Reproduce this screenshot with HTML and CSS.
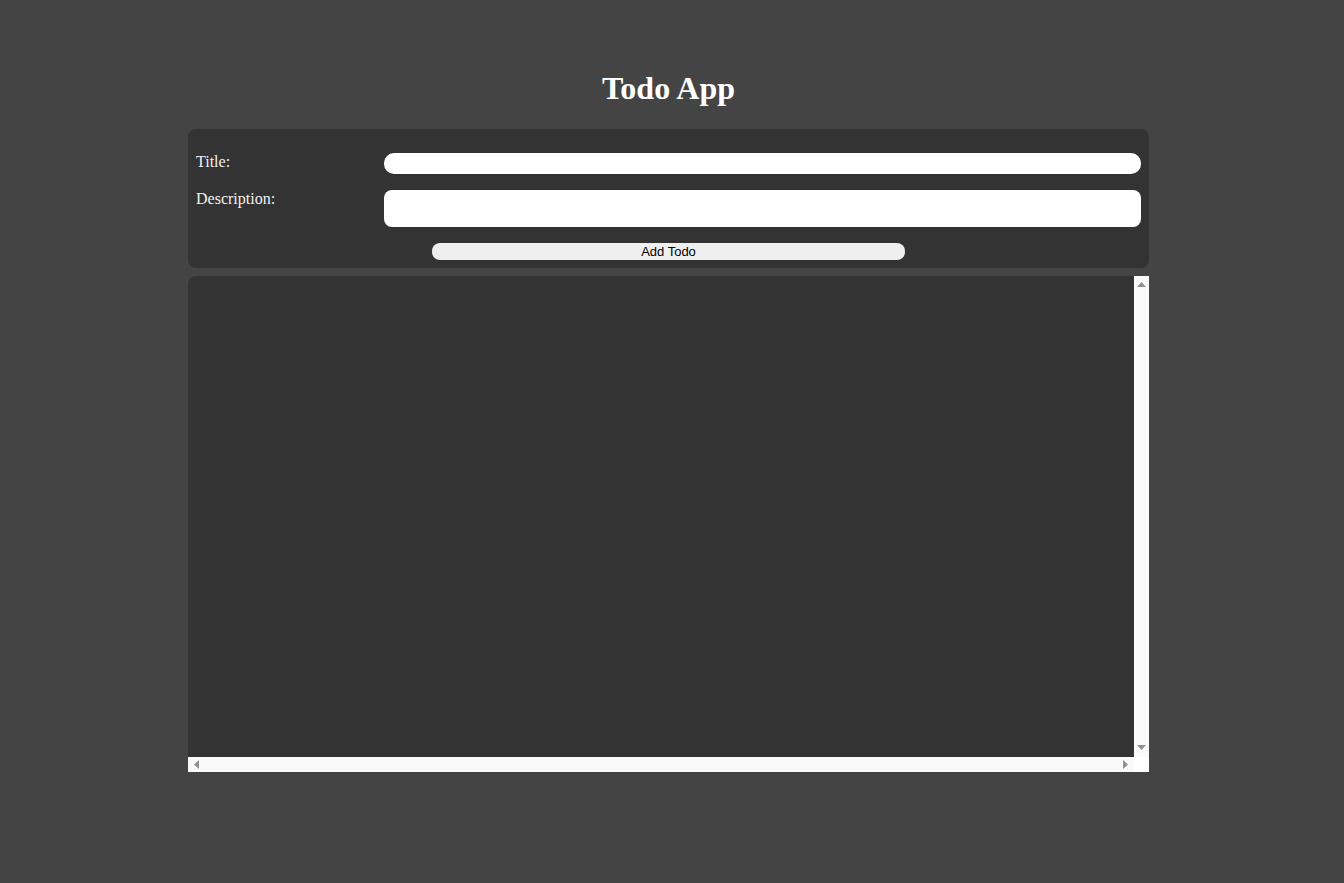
FILE: index.html
```html
<!DOCTYPE html>
<html lang="en">
<head>
<meta charset="utf-8">
<title>Todo App</title>
<link rel="stylesheet" href="styles.css">
</head>
<body>
<div class="app">
  <h1 class="app-title">Todo App</h1>
  <form class="todo-form">
    <div class="form-row">
      <label class="form-label" for="title">Title:</label>
      <input class="form-input" id="title" type="text">
    </div>
    <div class="form-row">
      <label class="form-label" for="desc">Description:</label>
      <textarea class="form-textarea" id="desc"></textarea>
    </div>
    <div class="form-actions">
      <button class="add-btn" type="button">Add Todo</button>
    </div>
  </form>
  <div class="todo-list">
    <div class="list-content"></div>
    <div class="vscroll">
      <span class="sb-btn sb-up"><svg width="9" height="5" viewBox="0 0 9 5"><polygon points="4.5,0 9,5 0,5" fill="#909090"/></svg></span>
      <span class="sb-btn sb-down"><svg width="9" height="5" viewBox="0 0 9 5"><polygon points="0,0 9,0 4.5,5" fill="#909090"/></svg></span>
    </div>
    <div class="hscroll">
      <span class="sb-btn sb-left"><svg width="5" height="9" viewBox="0 0 5 9"><polygon points="5,0 5,9 0,4.5" fill="#909090"/></svg></span>
      <span class="sb-btn sb-right"><svg width="5" height="9" viewBox="0 0 5 9"><polygon points="0,0 5,4.5 0,9" fill="#909090"/></svg></span>
    </div>
    <div class="sb-corner"></div>
  </div>
</div>
</body>
</html>
```
FILE: styles.css
```css
html, body {
  margin: 0;
  padding: 0;
}
body {
  background: #444444;
  font-family: "Liberation Serif", "Times New Roman", serif;
  color: #ffffff;
  padding-right: 7px;
}
.app {
  width: 961px;
  margin: 0 auto;
  padding-top: 70px;
}
.app-title {
  margin: 0 0 22px;
  text-align: center;
  font-size: 32px;
  line-height: 37px;
  font-weight: bold;
  color: #ffffff;
}
.todo-form {
  background: #333333;
  border-radius: 8px;
  padding: 24px 8px 8px;
  display: flex;
  flex-direction: column;
  gap: 16px;
  margin: 0 0 8px;
}
.form-row {
  display: grid;
  grid-template-columns: 188px 1fr;
  align-items: start;
}
.form-label {
  font-size: 16px;
  line-height: 18px;
  color: #f2f2f2;
}
.form-input {
  box-sizing: border-box;
  height: 21px;
  border: none;
  border-radius: 10px;
  background: #ffffff;
  margin: 0;
  padding: 0 8px;
  outline: none;
}
.form-textarea {
  box-sizing: border-box;
  height: 37px;
  border: none;
  border-radius: 8px;
  background: #ffffff;
  margin: 0;
  padding: 4px 8px;
  resize: none;
  display: block;
  outline: none;
}
.form-actions {
  display: flex;
  justify-content: center;
}
.add-btn {
  width: 473px;
  height: 17px;
  padding: 0;
  border: none;
  border-radius: 8px;
  background: #efefef;
  color: #000000;
  font-family: "Liberation Sans", Arial, sans-serif;
  font-size: 13px;
  line-height: 17px;
}
.todo-list {
  height: 496px;
  display: grid;
  grid-template-columns: 1fr 15px;
  grid-template-rows: 1fr 15px;
}
.list-content {
  background: #333333;
  border-radius: 8px 0 0 0;
}
.vscroll {
  background: #fafafa;
  display: flex;
  flex-direction: column;
  justify-content: space-between;
}
.hscroll {
  background: #fafafa;
  display: flex;
  justify-content: space-between;
}
.sb-corner {
  background: #ffffff;
}
.sb-btn {
  display: flex;
  align-items: center;
  justify-content: center;
}
.sb-btn svg {
  display: block;
}
.sb-up {
  width: 15px;
  height: 16px;
}
.sb-down {
  width: 15px;
  height: 19px;
}
.sb-left {
  width: 16px;
  height: 15px;
}
.sb-right {
  width: 18px;
  height: 15px;
}
```
